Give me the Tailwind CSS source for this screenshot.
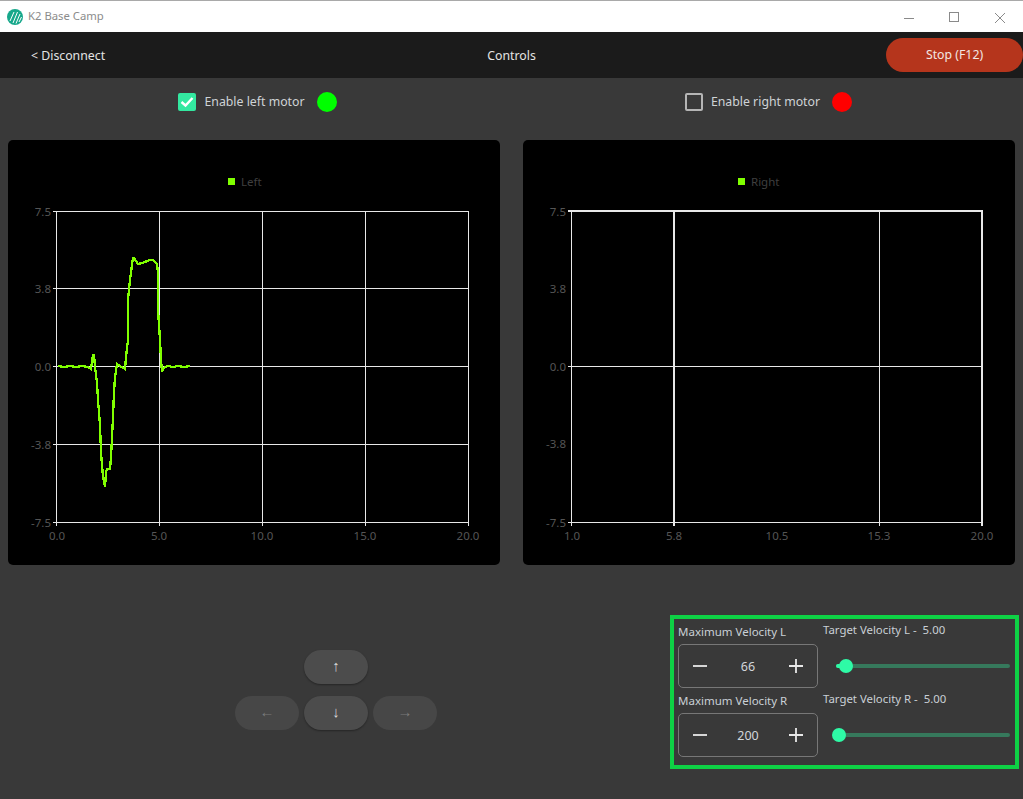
<!DOCTYPE html>
<html lang="en">
<head>
    <meta charset="UTF-8">
    <title>K2 Base Camp</title>
    <script src="https://cdn.jsdelivr.net/npm/@tailwindcss/browser@4"></script>
</head>
<body class="bg-[#393939] font-['Noto_Sans','Open_Sans',sans-serif] overflow-hidden">
<div class="w-[1023px] h-[799px] flex flex-col">

    <!-- Title bar -->
    <div class="h-[32px] bg-white border-t border-t-[#a9a9a9] flex items-center justify-between shrink-0">
        <div class="flex items-center pl-[7px] gap-[5px]">
            <svg width="16" height="16" viewBox="0 0 16 16">
                <circle cx="8" cy="8" r="8" fill="#17a88b"/>
                <path d="M3 12 L7 3 M6 14 L10.500 3 M9 14.500 L13 5 M12 13 L14.500 8" stroke="#fff" stroke-width="1" fill="none"/>
            </svg>
            <span class="text-[11.3px] text-[#8c8c8c]">K2 Base Camp</span>
        </div>
        <svg width="143" height="30" viewBox="0 0 143 30" fill="none" stroke="#8a8a8a" stroke-width="1">
            <path d="M24 16.500 H34"/>
            <rect x="69.500" y="10.500" width="9" height="9"/>
            <path d="M115 11 L125 21 M125 11 L115 21"/>
        </svg>
    </div>

    <!-- Header -->
    <div class="h-[46px] bg-[#1b1b1b] grid grid-cols-3 items-center shrink-0 text-[12.3px] text-[#e4e4e4]">
        <div class="pl-[31px] pt-[2px]">&lt; Disconnect</div>
        <div class="text-center pt-[2px]">Controls</div>
        <div class="flex justify-end">
            <div class="w-[137px] h-[34px] pt-[1px] rounded-full bg-[#b5351c] flex items-center justify-center text-[#f3e6e2]">Stop (F12)</div>
        </div>
    </div>

    <!-- Motor toggles -->
    <div class="grid grid-cols-2 gap-[23px] px-[8px] h-[48px] items-center shrink-0">
        <div class="flex items-center justify-center pl-[7px]">
            <div class="w-[18px] h-[18px] rounded-[2px] bg-[#33e8a0] flex items-center justify-center">
                <svg width="14" height="14" viewBox="0 0 14 14" fill="none" stroke="#fff" stroke-width="2.400">
                    <path d="M1.500 7 L5.500 10.500 L12.500 3"/>
                </svg>
            </div>
            <span class="ml-[8px] text-[12.3px] text-[#cfd3d6]">Enable left motor</span>
            <div class="ml-[12px] w-[20px] h-[20px] rounded-full bg-[#00ff00]"></div>
        </div>
        <div class="flex items-center justify-center pr-[1px]">
            <div class="w-[18px] h-[18px] rounded-[2px] border-2 border-[#b5b5b5]"></div>
            <span class="ml-[8px] text-[12.3px] text-[#cfd3d6]">Enable right motor</span>
            <div class="ml-[12px] w-[20px] h-[20px] rounded-full bg-[#ff0000]"></div>
        </div>
    </div>

    <!-- Charts -->
    <div class="grid grid-cols-2 gap-[23px] px-[8px] pt-[14px] shrink-0">
        <div class="h-[425px] bg-black rounded-[5px] overflow-hidden">
            <svg width="492" height="425" viewBox="8 140 492 425" font-size="11.500" fill="#555" font-family="Noto Sans">
                <rect x="228" y="178" width="7" height="7" fill="#80ff00"/>
                <text x="241" y="186" fill="#3f3f3f">Left</text>
                <g stroke="#e8e8e8" stroke-width="1" fill="none" shape-rendering="crispEdges">
                    <path d="M57 211.500 H468 M57 288.500 H468 M57 366.500 H468 M57 444.500 H468 M53 522.500 H468"/>
                    <path d="M53 211.500 H57 M53 288.500 H57 M53 366.500 H57 M53 444.500 H57"/>
                    <path d="M56.500 211 V526 M159.500 211 V526 M262.500 211 V526 M365.500 211 V526 M468.500 211 V526"/>
                </g>
                <g text-anchor="end">
                    <text x="51" y="216">7.5</text>
                    <text x="51" y="293">3.8</text>
                    <text x="51" y="371">0.0</text>
                    <text x="51" y="449">-3.8</text>
                    <text x="51" y="527">-7.5</text>
                </g>
                <g text-anchor="middle">
                    <text x="57" y="540">0.0</text>
                    <text x="159" y="540">5.0</text>
                    <text x="262" y="540">10.0</text>
                    <text x="365" y="540">15.0</text>
                    <text x="468" y="540">20.0</text>
                </g>
                <polyline fill="none" stroke="#80ff00" stroke-width="2.300" shape-rendering="crispEdges" points="58,366 64,367 70,366 76,367 82,366 88,367 91,369 93,355 94,355 95,367 97,383 98,400 100,425 101,452 102,465 103,477 105,487 106,472 107,469 110,469 111,457 113,417 114,392 115,377 117,364 120,366 125,369 126,357 128,340 128,300 130,280 132,265 133,258 134,258 138,264 142,263 150,260 153,260 157,264 158,273 158,310 160,340 161,360 162,372 163,368 168,366 173,367 178,366 184,367 190,366"/>
            </svg>
        </div>
        <div class="h-[425px] bg-black rounded-[5px] overflow-hidden">
            <svg width="492" height="425" viewBox="523 140 492 425" font-size="11.500" fill="#555" font-family="Noto Sans">
                <rect x="738" y="178" width="7" height="7" fill="#80ff00"/>
                <text x="751" y="186" fill="#3f3f3f">Right</text>
                <g stroke="#e8e8e8" fill="none" shape-rendering="crispEdges">
                    <path stroke-width="2" d="M568 211 H983 M674 211 V526 M982 211 V526"/>
                    <path stroke-width="1" d="M568 366.500 H982 M568 522.500 H982 M571.500 211 V526 M879.500 211 V526"/>
                </g>
                <g text-anchor="end">
                    <text x="566" y="216">7.5</text>
                    <text x="566" y="293">3.8</text>
                    <text x="566" y="371">0.0</text>
                    <text x="566" y="448">-3.8</text>
                    <text x="566" y="527">-7.5</text>
                </g>
                <g text-anchor="middle">
                    <text x="572" y="540">1.0</text>
                    <text x="674" y="540">5.8</text>
                    <text x="777" y="540">10.5</text>
                    <text x="879" y="540">15.3</text>
                    <text x="982" y="540">20.0</text>
                </g>
            </svg>
        </div>
    </div>

    <!-- Bottom controls -->
    <div class="flex items-start pt-[50px] shrink-0">
        <!-- Arrow pad -->
        <div class="ml-[235px] mt-[35px] flex flex-col items-center gap-[12px]">
            <div class="w-[64px] h-[34px] pb-[3px] rounded-full bg-[#4c4c4c] shadow-[0_1px_2px_rgba(0,0,0,0.35)] flex items-center justify-center text-[15px] text-[#d8d8d8]">↑</div>
            <div class="flex gap-[5px]">
                <div class="w-[64px] h-[34px] pb-[3px] rounded-full bg-[#474747] flex items-center justify-center text-[15px] text-[#7a7a7a]">←</div>
                <div class="w-[64px] h-[34px] pb-[3px] rounded-full bg-[#4c4c4c] shadow-[0_1px_2px_rgba(0,0,0,0.35)] flex items-center justify-center text-[15px] text-[#d8d8d8]">↓</div>
                <div class="w-[64px] h-[34px] pb-[3px] rounded-full bg-[#474747] flex items-center justify-center text-[15px] text-[#7a7a7a]">→</div>
            </div>
        </div>

        <!-- Velocity panel -->
        <div class="ml-auto mr-[4px] w-[349px] h-[154px] border-[4px] border-[#0ed145] pl-[4px] pr-[5px] flex flex-col">
            <div class="flex h-[69px]">
                <div class="w-[140px] shrink-0">
                    <div class="h-[25px] pt-[4px] text-[11.500px] leading-[18px] text-[#c9d0d6]">Maximum Velocity L</div>
                    <div class="h-[44px] border border-[#777] rounded-[5px] flex items-center justify-between px-[13px]">
                        <svg width="16" height="16" viewBox="0 0 16 16" stroke="#e8e8e8" stroke-width="1.800"><path d="M1 8 H15"/></svg>
                        <span class="pt-[2px] text-[12.500px] text-[#d2d6d9]">66</span>
                        <svg width="16" height="16" viewBox="0 0 16 16" stroke="#e8e8e8" stroke-width="1.800"><path d="M1 8 H15 M8 1 V15"/></svg>
                    </div>
                </div>
                <div class="ml-[5px] flex-1">
                    <div class="h-[27px] pt-[2px] text-[11.400px] leading-[18px] text-[#c9d0d6]">Target Velocity L -&nbsp; 5.00</div>
                    <div class="relative ml-[13px] mt-[18px] h-[4px] rounded-full bg-[#36795c]">
                        <div class="absolute left-0 top-0 w-[10px] h-[4px] rounded-full bg-[#2efaa6]"></div>
                        <div class="absolute left-[3px] top-[-5px] w-[14px] h-[14px] rounded-full bg-[#2efaa6]"></div>
                    </div>
                </div>
            </div>
            <div class="flex h-[69px]">
                <div class="w-[140px] shrink-0">
                    <div class="h-[25px] pt-[4px] text-[11.500px] leading-[18px] text-[#c9d0d6]">Maximum Velocity R</div>
                    <div class="h-[44px] border border-[#777] rounded-[5px] flex items-center justify-between px-[13px]">
                        <svg width="16" height="16" viewBox="0 0 16 16" stroke="#e8e8e8" stroke-width="1.800"><path d="M1 8 H15"/></svg>
                        <span class="pt-[2px] text-[12.500px] text-[#d2d6d9]">200</span>
                        <svg width="16" height="16" viewBox="0 0 16 16" stroke="#e8e8e8" stroke-width="1.800"><path d="M1 8 H15 M8 1 V15"/></svg>
                    </div>
                </div>
                <div class="ml-[5px] flex-1">
                    <div class="h-[27px] pt-[2px] text-[11.400px] leading-[18px] text-[#c9d0d6]">Target Velocity R -&nbsp; 5.00</div>
                    <div class="relative ml-[10px] mt-[18px] h-[4px] rounded-full bg-[#36795c]">
                        <div class="absolute left-[-1px] top-[-5px] w-[14px] h-[14px] rounded-full bg-[#2efaa6]"></div>
                    </div>
                </div>
            </div>
        </div>
    </div>
</div>
</body>
</html>
